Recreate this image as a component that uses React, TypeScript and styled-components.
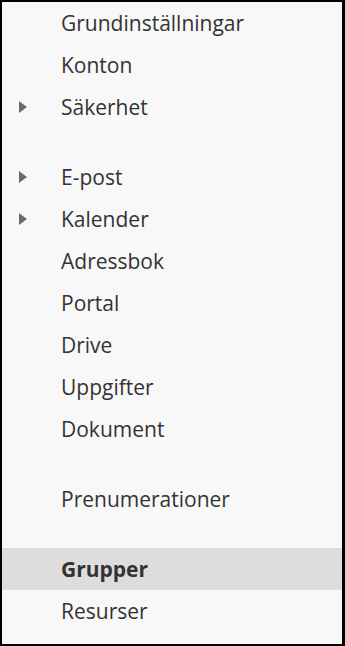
import React from 'react'
import styled, { createGlobalStyle } from 'styled-components'

const GlobalStyle = createGlobalStyle`
  html, body {
    margin: 0;
    padding: 0;
    background: #f8f8f8;
  }
  * {
    box-sizing: border-box;
  }
`

const Panel = styled.nav`
  width: 345px;
  height: 646px;
  background: #f8f8f8;
  border-style: solid;
  border-color: #000;
  border-width: 2px 3px 2px 2px;
  font-family: 'Open Sans', 'Noto Sans', sans-serif;
  color: #333;
  display: flex;
  flex-direction: column;
`

const Item = styled.div<{ active?: boolean }>`
  height: 42px;
  display: flex;
  align-items: center;
  background: ${props => (props.active ? '#dddddd' : 'transparent')};
  font-size: 21px;
  font-weight: ${props => (props.active ? 700 : 400)};
  cursor: pointer;
`

const Toggle = styled.span`
  width: 59px;
  flex-shrink: 0;
  display: flex;
  align-items: center;
  padding-left: 17px;
`

const Caret = styled.span`
  width: 0;
  height: 0;
  border-top: 6px solid transparent;
  border-bottom: 6px solid transparent;
  border-left: 8px solid #6b6b6b;
`

const Label = styled.span`
  white-space: nowrap;
`

const Spacer = styled.div`
  height: 28px;
`

type Entry = { label: string; caret?: boolean; active?: boolean } | 'gap'

const entries: Entry[] = [
  { label: 'Grundinställningar' },
  { label: 'Konton' },
  { label: 'Säkerhet', caret: true },
  'gap',
  { label: 'E-post', caret: true },
  { label: 'Kalender', caret: true },
  { label: 'Adressbok' },
  { label: 'Portal' },
  { label: 'Drive' },
  { label: 'Uppgifter' },
  { label: 'Dokument' },
  'gap',
  { label: 'Prenumerationer' },
  'gap',
  { label: 'Grupper', active: true },
  { label: 'Resurser' },
]

export default function App() {
  return (
    <>
      <GlobalStyle />
      <Panel>
        {entries.map((e, i) =>
          e === 'gap' ? (
            <Spacer key={i} />
          ) : (
            <Item key={i} active={e.active}>
              <Toggle>{e.caret && <Caret />}</Toggle>
              <Label>{e.label}</Label>
            </Item>
          )
        )}
      </Panel>
    </>
  )
}
